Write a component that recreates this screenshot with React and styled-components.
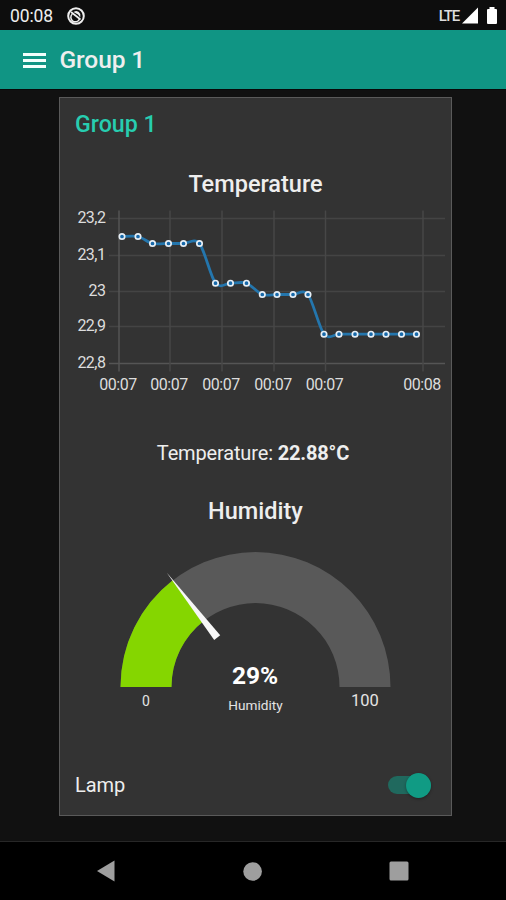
import { useState } from "react";
import styled, { createGlobalStyle } from "styled-components";

const GlobalStyle = createGlobalStyle`
    * {
        box-sizing: border-box;
    }
    body {
        margin: 0;
        background: #111111;
        color: #eeeeee;
        font-family: Roboto, "Liberation Sans", sans-serif;
    }
`;

const Screen = styled.div`
    display: flex;
    flex-direction: column;
    width: 506px;
    height: 900px;
    overflow: hidden;
`;

const StatusBar = styled.div`
    display: flex;
    align-items: center;
    height: 30px;
    padding: 1px 8px 0 10px;
    background: #0d0d0d;
`;
const Clock = styled.span`
    width: 57px;
    font-size: 17.5px;
    letter-spacing: -0.1px;
`;
const Signal = styled.div`
    display: flex;
    align-items: center;
    margin-left: auto;
    font-size: 15px;
    font-weight: 500;
    letter-spacing: -1.2px;
    color: #dddddd;

    svg {
        margin-left: 3px;
    }
`;

const Header = styled.header`
    display: flex;
    align-items: center;
    height: 59px;
    padding-left: 23px;
    gap: 13.5px;
    background: #109584;
`;
const MenuButton = styled.button`
    display: grid;
    gap: 3px;
    width: 23px;
    padding: 1px 0 0;
    border: none;
    background: none;
`;
const MenuLine = styled.span`
    height: 3px;
    background: #f2fffc;
`;
const HeaderTitle = styled.h1`
    margin: 0;
    font-size: 24.5px;
    font-weight: 500;
    letter-spacing: -0.1px;
`;

const Main = styled.main`
    flex: 1;
    padding: 7px 54px 0 59px;
    border-bottom: 1px solid #272727;
    border-top: 1px solid #080808;
`;
const Card = styled.section`
    display: flex;
    flex-direction: column;
    height: 719px;
    border: 1px solid #5a5a5a;
    background: #333333;
`;
const CardTitle = styled.h2`
    margin: 11px 0 0 15px;
    font-size: 23.2px;
    line-height: 30px;
    font-weight: 500;
    color: #27cdb0;
`;
const WidgetTitle = styled.h3`
    margin: ${(props) => props.$top}px 0 0;
    font-size: 23.5px;
    line-height: 30px;
    font-weight: 500;
    text-align: center;
`;
const Reading = styled.p`
    margin: 41px 0 0;
    font-size: 20px;
    line-height: 26px;
    letter-spacing: -0.15px;
    text-align: center;
    padding-right: 5px;
`;
const Graphic = styled.svg`
    display: block;
    width: 391px;
    height: ${(props) => props.$height}px;
`;
const AxisText = styled.text`
    fill: #dddddd;
    font-size: 16px;
    letter-spacing: -0.5px;
    text-anchor: ${(props) => props.$anchor || "middle"};
`;
const GaugeText = styled.text`
    fill: ${(props) => (props.$bold ? "#ffffff" : "#e4e4e4")};
    font-size: ${(props) => props.$size}px;
    font-weight: ${(props) => (props.$bold ? 700 : 400)};
    text-anchor: middle;
`;

const SwitchRow = styled.div`
    display: flex;
    align-items: center;
    justify-content: space-between;
    margin-top: auto;
    padding: 0 20px 17px 15px;
    font-size: 20px;
    line-height: 26px;
    letter-spacing: -0.1px;
`;
const Track = styled.button`
    display: flex;
    align-items: center;
    justify-content: ${(props) => (props.$on ? "flex-end" : "flex-start")};
    width: 43px;
    height: 18px;
    padding: 0;
    border: none;
    border-radius: 9px;
    background: ${(props) => (props.$on ? "#20695e" : "#666666")};
`;
const Thumb = styled.span`
    width: 25px;
    height: 25px;
    flex: none;
    border-radius: 50%;
    background: ${(props) => (props.$on ? "#109b84" : "#bbbbbb")};
    box-shadow: 0 1px 3px rgba(0, 0, 0, 0.35);
`;

const NavBar = styled.nav`
    display: flex;
    align-items: center;
    height: 58px;
    padding: 0 97px 0 96px;
    justify-content: space-between;
    background: #000000;
`;

const yTicks = [
    ["23,2", 218],
    ["23,1", 255],
    ["23", 291],
    ["22,9", 326],
    ["22,8", 363],
];
const xTicks = [
    ["00:07", 119],
    ["00:07", 170],
    ["00:07", 222],
    ["00:07", 274],
    ["00:07", 325.5],
    ["00:08", 423],
];
const points = [
    [122, 236],
    [138, 236],
    [152.5, 243],
    [168.5, 243],
    [183.5, 243],
    [199.5, 243],
    [215.5, 282.7],
    [230.5, 282.7],
    [246.5, 282.7],
    [262.3, 294],
    [277, 294],
    [293, 294],
    [308, 294],
    [324, 333.7],
    [339, 333.7],
    [355, 333.7],
    [371, 333.7],
    [386, 333.7],
    [401.5, 333.7],
    [416.5, 333.7],
];

// Smooth line through all the points
function smoothPath(list, tension = 0.15) {
    return list.slice(1).reduce((d, p, i) => {
        const a = list[i];
        const before = list[i - 1] || a;
        const after = list[i + 2] || p;
        const c1 = [a[0] + (p[0] - before[0]) * tension, a[1] + (p[1] - before[1]) * tension];
        const c2 = [p[0] - (after[0] - a[0]) * tension, p[1] - (after[1] - a[1]) * tension];
        return `${d} C${c1} ${c2} ${p}`;
    }, `M${list[0]}`);
}

function TemperatureChart() {
    return (
        <Graphic $height={200} viewBox="60 198.5 391 200">
            {yTicks.map(([label, y]) => (
                <g key={label}>
                    <path
                        d={`M109 ${y}H445`}
                        stroke={label === "22,8" ? "#555555" : "#444444"}
                        strokeWidth="1.5"
                    />
                    <AxisText x={105.5} y={y + 4.5} $anchor="end">
                        {label}
                    </AxisText>
                </g>
            ))}
            {xTicks.map(([label, x], i) => (
                <g key={x}>
                    <path
                        d={`M${x} 210V371`}
                        stroke={i === 0 ? "#555555" : "#474747"}
                        strokeWidth="1.5"
                    />
                    <AxisText x={x - 1} y={389.5}>
                        {label}
                    </AxisText>
                </g>
            ))}
            <path d={smoothPath(points)} fill="none" stroke="#2476ad" strokeWidth="2.8" />
            {points.map(([x, y]) => (
                <circle key={x} cx={x} cy={y} r="2.7" fill="#1769aa" stroke="#e6eef5" strokeWidth="1.7" />
            ))}
        </Graphic>
    );
}

function HumidityGauge({ value }) {
    const cx = 255.5;
    const cy = 687;
    const angle = (Math.PI * value) / 100;
    const at = (r) => [cx - r * Math.cos(angle), cy - r * Math.sin(angle)];
    return (
        <Graphic $height={194} viewBox="60 526 391 194">
            <path d="M120.5 687A135 135 0 0 1 390.5 687H339.5A84 84 0 0 0 171.5 687Z" fill="#595959" />
            <path d={`M120.5 687A135 135 0 0 1 ${at(135)}L${at(84)}A84 84 0 0 0 171.5 687Z`} fill="#85d600" />
            <path
                d="M-145 0L-62.5 -3.8V3.8Z"
                fill="#f7f7f7"
                transform={`translate(${cx} ${cy}) rotate(${value * 1.8})`}
            />
            <GaugeText x={255} y={684} $size={24.5} $bold>
                {value}%
            </GaugeText>
            <GaugeText x={255.5} y={710} $size={13.6}>
                Humidity
            </GaugeText>
            <GaugeText x={146} y={705.5} $size={14}>
                0
            </GaugeText>
            <GaugeText x={365} y={705.5} $size={16.5}>
                100
            </GaugeText>
        </Graphic>
    );
}

function App() {
    const [lamp, setLamp] = useState(true);
    return (
        <Screen>
            <GlobalStyle />
            <StatusBar>
                <Clock>00:08</Clock>
                <svg width="18" height="18" viewBox="0 0 18 18" fill="none" stroke="#eeeeee">
                    <circle cx="9" cy="9" r="7.8" strokeWidth="2" />
                    <path d="M5.3 7A4.5 4.5 0 1 0 12.5 12" strokeWidth="1.5" />
                    <path d="M4 5L13.5 12.5" strokeWidth="1.7" />
                    <path d="M6.5 5Q11 2.5 13.3 7V10.5L11 7.5Z" fill="#eeeeee" stroke="none" />
                </svg>
                <Signal>
                    LTE
                    <svg width="36" height="18" viewBox="0 0 36 18" fill="#ffffff">
                        <path d="M0 16.5H16V.5Z" />
                        <path d="M25 3q0-1 1-1h1.500V0h5V2H34q1 0 1 1v13q0 1-1 1h-8q-1 0-1-1Z" />
                    </svg>
                </Signal>
            </StatusBar>
            <Header>
                <MenuButton aria-label="Menu">
                    <MenuLine />
                    <MenuLine />
                    <MenuLine />
                </MenuButton>
                <HeaderTitle>Group 1</HeaderTitle>
            </Header>
            <Main>
                <Card>
                    <CardTitle>Group 1</CardTitle>
                    <WidgetTitle $top={30}>Temperature</WidgetTitle>
                    <TemperatureChart />
                    <Reading>
                        Temperature: <b>22.88°C</b>
                    </Reading>
                    <WidgetTitle $top={30}>Humidity</WidgetTitle>
                    <HumidityGauge value={29} />
                    <SwitchRow>
                        Lamp
                        <Track $on={lamp} onClick={() => setLamp(!lamp)} aria-label="Lamp">
                            <Thumb $on={lamp} />
                        </Track>
                    </SwitchRow>
                </Card>
            </Main>
            <NavBar>
                <svg width="19" height="22" viewBox="0 0 19 22" fill="#9e9e9e">
                    <path d="M1 11L18.5 .5V21.5Z" />
                </svg>
                <svg width="20" height="19" viewBox="0 0 20 19" fill="#9e9e9e">
                    <circle cx="10.6" cy="9.5" r="9.3" />
                </svg>
                <svg width="20" height="20" viewBox="0 0 20 20" fill="#9e9e9e">
                    <rect x=".5" y=".5" width="19" height="19" rx="1.5" />
                </svg>
            </NavBar>
        </Screen>
    );
}

export default App;
